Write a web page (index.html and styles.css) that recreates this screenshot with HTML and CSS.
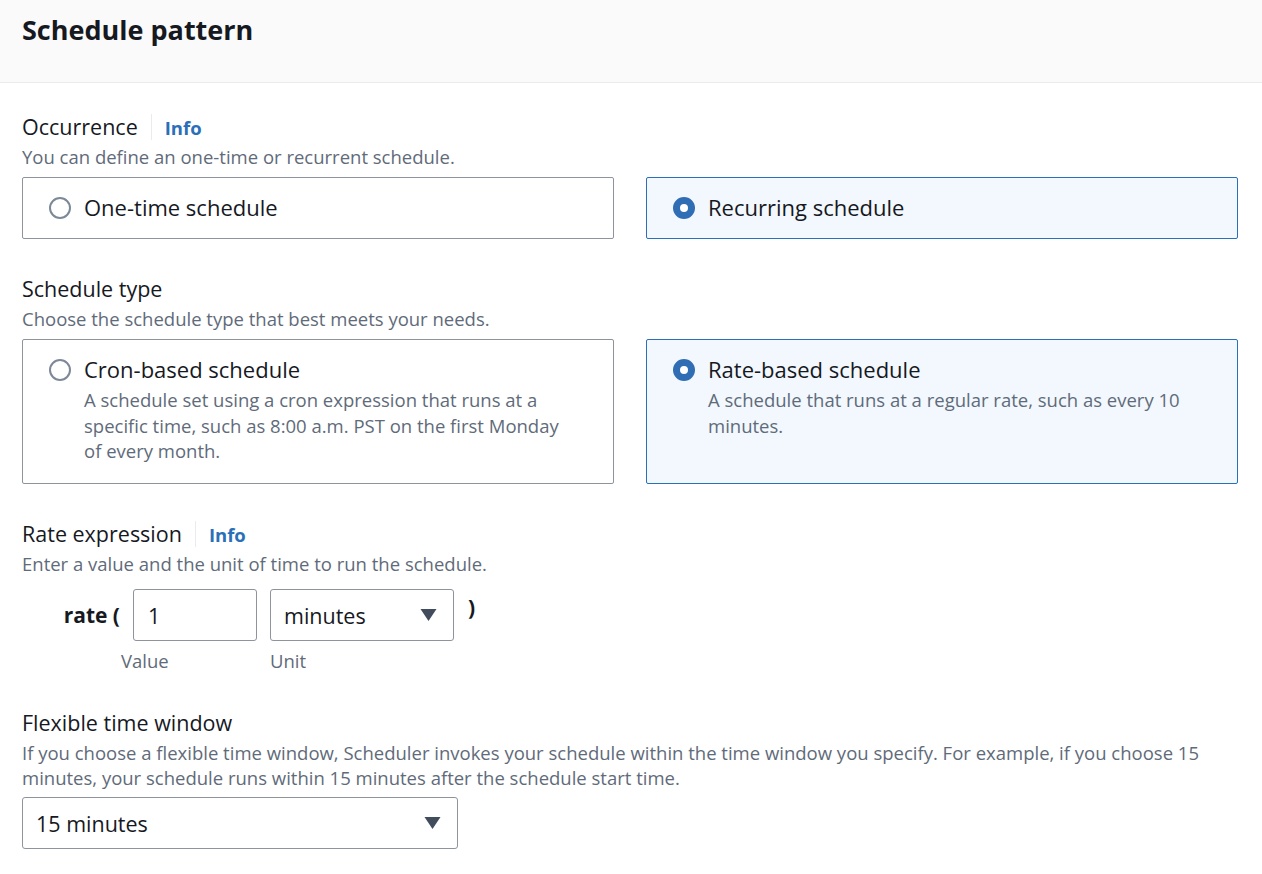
FILE: index.html
```html
<!DOCTYPE html>
<html>
<head>
<meta charset="utf-8">
<link rel="stylesheet" href="styles.css">
</head>
<body>
<div class="panel">
  <header class="head"><h2 class="title">Schedule pattern</h2></header>
  <div class="content">
    <section class="field">
      <div class="label-row"><span class="label">Occurrence</span><span class="sep"></span><a class="info">Info</a></div>
      <div class="desc">You can define an one-time or recurrent schedule.</div>
      <div class="tiles">
        <div class="tile short"><span class="radio"></span><div class="tile-body"><div class="tile-title">One-time schedule</div></div></div>
        <div class="tile short selected"><span class="radio on"></span><div class="tile-body"><div class="tile-title">Recurring schedule</div></div></div>
      </div>
    </section>
    <section class="field">
      <div class="label-row"><span class="label">Schedule type</span></div>
      <div class="desc">Choose the schedule type that best meets your needs.</div>
      <div class="tiles">
        <div class="tile tall"><span class="radio"></span><div class="tile-body"><div class="tile-title">Cron-based schedule</div><div class="tile-desc">A schedule set using a cron expression that runs at a specific time, such as 8:00 a.m. PST on the first Monday of every month.</div></div></div>
        <div class="tile tall selected"><span class="radio on"></span><div class="tile-body"><div class="tile-title">Rate-based schedule</div><div class="tile-desc">A schedule that runs at a regular rate, such as every 10 minutes.</div></div></div>
      </div>
    </section>
    <section class="field">
      <div class="label-row"><span class="label">Rate expression</span><span class="sep"></span><a class="info">Info</a></div>
      <div class="desc">Enter a value and the unit of time to run the schedule.</div>
      <div class="rate">
        <span class="rate-open">rate (</span>
        <div class="rate-col">
          <div class="input value">1</div>
          <div class="sub first">Value</div>
        </div>
        <div class="rate-col">
          <div class="input select unit"><span>minutes</span><svg class="caret" viewBox="0 0 16 12" width="17" height="12"><path d="M0 0h16L8 12z" fill="#414d5c"/></svg></div>
          <div class="sub">Unit</div>
        </div>
        <span class="rate-close">)</span>
      </div>
    </section>
    <section class="field">
      <div class="label-row"><span class="label">Flexible time window</span></div>
      <div class="desc">If you choose a flexible time window, Scheduler invokes your schedule within the time window you specify. For example, if you choose 15 minutes, your schedule runs within 15 minutes after the schedule start time.</div>
      <div class="input select flex"><span>15 minutes</span><svg class="caret" viewBox="0 0 16 12" width="17" height="12"><path d="M0 0h16L8 12z" fill="#414d5c"/></svg></div>
    </section>
  </div>
</div>
</body>
</html>
```
FILE: styles.css
```css
* { box-sizing: border-box; }
body {
  margin: 0;
  background: #fff;
  font-family: "Open Sans", "Noto Sans", sans-serif;
  color: #16191f;
}
.panel { width: 1262px; }
.head {
  background: #fafafa;
  height: 83px;
  border-bottom: 1px solid #e9ebed;
  padding: 12px 22px 0;
}
.title {
  margin: 0;
  font-size: 27px;
  font-weight: 700;
  line-height: 36px;
}
.content { padding: 28px 24px 0 22px; }
.field { margin-bottom: 34px; }
.label-row { display: flex; align-items: center; height: 32px; }
.label { font-size: 21.5px; line-height: 32px; }
.sep { width: 1px; height: 26px; background: #e9ebed; margin: 0 13px; }
.info { color: #2a6fb8; font-weight: 700; font-size: 18.5px; }
.desc {
  color: #5f6b7a;
  font-size: 18.5px;
  line-height: 25px;
  margin-top: 1px;
}
.tiles {
  display: grid;
  grid-template-columns: 592px 592px;
  column-gap: 32px;
  margin-top: 8px;
}
.tile {
  border: 1px solid #8d949c;
  border-radius: 2px;
  display: flex;
  padding: 14px 40px 0 26px;
}
.tile.short { height: 62px; }
.tile.tall { height: 145px; }
.tile.selected { border-color: #2a6fb8; background: #f2f8fd; }
.radio {
  flex: none;
  width: 22px;
  height: 22px;
  border-radius: 50%;
  border: 2px solid #7d8998;
  margin: 5px 13px 0 0;
  background: #fff;
}
.radio.on { border: 7px solid #2f6db4; }
.tile-title { font-size: 22px; line-height: 30px; }
.tile-desc {
  color: #5f6b7a;
  font-size: 18.5px;
  line-height: 25.5px;
  margin-top: 3px;
}
.rate { display: flex; align-items: flex-start; margin-top: 13px; }
.rate-open {
  font-weight: 700;
  font-size: 21px;
  line-height: 52px;
  width: 111px;
  text-align: right;
  padding-right: 13px;
}
.rate-col { display: flex; flex-direction: column; margin-right: 13px; }
.input {
  border: 1px solid #8d949c;
  border-radius: 3px;
  height: 52px;
  font-size: 21.5px;
  display: flex;
  align-items: center;
  padding: 0 13px;
}
.value { width: 124px; padding-left: 14px; }
.unit { width: 184px; }
.select { justify-content: space-between; padding-right: 16px; }
.sub { color: #5f6b7a; font-size: 18.5px; line-height: 24px; margin-top: 8px; }
.sub.first { margin-left: -12px; }
.rate-close { font-weight: 700; font-size: 21px; line-height: 36px; margin-left: 1px; }
.flex { width: 436px; margin-top: 7px; }
```
